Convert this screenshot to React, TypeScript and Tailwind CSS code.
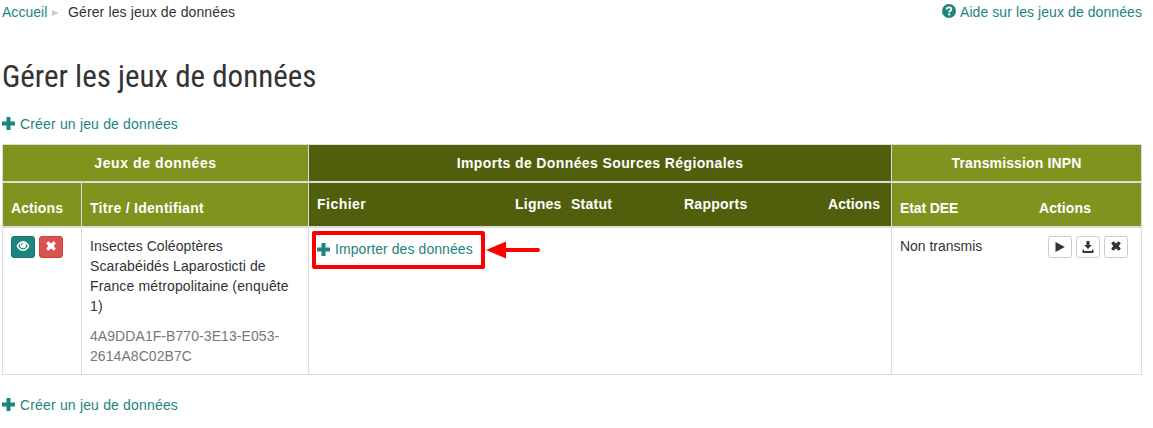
import React from "react";

function Plus() {
  return (
    <svg width="13" height="13" viewBox="0 0 13 13" className="relative -top-px shrink-0" fill="currentColor">
      <path d="M5 0h3q.5 0 .5.5V4.500h4q.5 0 .5.5v3q0 .5-.5.5h-4v4q0 .5-.5.5H5q-.5 0-.5-.5v-4h-4Q0 8.500 0 8V5Q0 4.500.5 4.500h4V.5Q4.500 0 5 0z" />
    </svg>
  );
}

function Cross() {
  return (
    <svg width="10" height="10" viewBox="0 0 10 10" className="relative -top-px" fill="currentColor">
      <path d="M2.300.2 5 2.500 7.700.2 9.800 2.300 7.700 5 9.800 7.700 7.700 9.800 5 7.500 2.300 9.800.2 7.700 2.300 5 .2 2.300z" />
    </svg>
  );
}

function Eye() {
  return (
    <svg width="14" height="12" viewBox="0 0 14 12" className="relative -top-px">
      <path d="M1.300 6Q4 1.700 7 1.700T12.700 6Q10 10.300 7 10.300T1.300 6z" fill="none" stroke="white" strokeWidth="1.500" />
      <circle cx="7" cy="5.300" r="3" fill="white" />
      <path d="M5.200 5.200Q5.300 3.700 6.900 3.500" fill="none" stroke="#1b857e" strokeWidth="1" />
    </svg>
  );
}

function Help() {
  return (
    <svg width="14" height="14" viewBox="0 0 14 14">
      <circle cx="7" cy="7" r="7" fill="currentColor" />
      <path d="M4.700 5.500Q4.700 3.400 7 3.400T9.300 5.200Q9.300 6.300 8.200 6.900Q7.200 7.400 7.200 8.500" fill="none" stroke="white" strokeWidth="1.900" />
      <path d="M6.100 9.500h2.200v1.800H6.100z" fill="white" />
    </svg>
  );
}

function Create() {
  return (
    <a className="flex h-5 items-center gap-[5px] text-[#1b857e]">
      <Plus />
      <span>Créer un jeu de données</span>
    </a>
  );
}

function SmallButton({ children }: { children: React.ReactNode }) {
  return (
    <button className="flex h-[22px] w-6 items-center justify-center rounded-[3px] border border-[#ccc] text-[#333]">
      {children}
    </button>
  );
}

export default function App() {
  return (
    <div className="h-[428px] w-[1153px] overflow-hidden bg-white pl-[2px] pr-[11px] pt-[2px] font-['Liberation_Sans',sans-serif] text-[14px] leading-5 tracking-[0.17px] whitespace-nowrap text-[#333]">
      <div className="flex h-5 justify-between">
        <div className="flex items-center">
          <a className="w-[45px] tracking-[0.03px] text-[#1b857e]">Accueil</a>
          <svg width="7" height="6" viewBox="0 0 7 6" className="ml-[5px] mr-[9px] mt-px" fill="#ccc">
            <path d="M0 0 7 3 0 6z" />
          </svg>
          <span className="tracking-[0.12px]">Gérer les jeux de données</span>
        </div>
        <a className="flex items-center gap-1 text-[#1b857e]">
          <span className="-mt-0.5 h-[14px]"><Help /></span>
          <span className="tracking-[0.08px]">Aide sur les jeux de données</span>
        </a>
      </div>
      <h1 className="mt-[37px] h-9 font-['Roboto_Condensed',Roboto,sans-serif] text-[31px] leading-9 tracking-normal">
        Gérer les jeux de données
      </h1>
      <div className="mt-[19px]">
        <Create />
      </div>

      <div className="mt-[10px] grid h-[231px] w-[1140px] grid-cols-[79px_227px_583px_251px] grid-rows-[38px_45px_147px] border-t border-[#ddd]">
        <div className="col-span-2 border-b-2 border-l border-[#ddd] bg-[#7f931e] pt-2 text-center font-bold tracking-[0.58px] text-white">Jeux de données</div>
        <div className="border-b-2 border-l border-[#ddd] bg-[#4f5f0b] pt-2 text-center font-bold tracking-[0.39px] text-white">Imports de Données Sources Régionales</div>
        <div className="border-x border-b-2 border-[#ddd] bg-[#7f931e] pt-2 text-center font-bold tracking-[0.13px] text-white">Transmission INPN</div>

        <div className="border-b-2 border-l border-[#ddd] bg-[#7f931e] pl-2 pt-[15px] font-bold tracking-[0.1px] text-white">Actions</div>
        <div className="border-b-2 border-l border-[#ddd] bg-[#7f931e] pl-2 pt-[15px] font-bold tracking-[0.28px] text-white">Titre / Identifiant</div>
        <div className="grid grid-cols-[198px_56px_113px_144px_1fr] border-b-2 border-l border-[#ddd] bg-[#4f5f0b] pl-2 pt-[11px] font-bold tracking-[0.25px] text-white">
          <span className="tracking-[0.48px]">Fichier</span>
          <span>Lignes</span>
          <span>Statut</span>
          <span>Rapports</span>
          <span className="tracking-[0.1px]">Actions</span>
        </div>
        <div className="grid grid-cols-[139px_1fr] border-x border-b-2 border-[#ddd] bg-[#7f931e] pl-2 pt-[15px] font-bold tracking-[0.1px] text-white">
          <span className="tracking-[-0.1px]">Etat DEE</span>
          <span>Actions</span>
        </div>

        <div className="flex items-start gap-1 border-b border-l border-[#ddd] pl-2 pt-2">
          <button className="flex h-[22px] w-6 items-center justify-center rounded-[3px] border border-[#17736d] bg-[#1b857e]"><Eye /></button>
          <button className="flex h-[22px] w-6 items-center justify-center rounded-[3px] border border-[#d43f3a] bg-[#d9534f] text-white"><Cross /></button>
        </div>
        <div className="border-b border-l border-[#ddd] pl-2 pt-2">
          <p><span className="tracking-[0.07px]">Insectes Coléoptères</span><br /><span className="tracking-[0.11px]">Scarabéidés Laparosticti de</span><br /><span className="tracking-[0.14px]">France métropolitaine (enquête</span><br />1)</p>
          <p className="mt-[10px] tracking-[0.07px] text-[#777]">4A9DDA1F-B770-3E13-E053-<br />2614A8C02B7C</p>
        </div>
        <div className="flex items-start border-b border-l border-[#ddd] pl-[3px] pt-[3px]">
          <a className="flex h-[38px] w-[173px] items-center gap-[5px] rounded-[2px] border-4 border-[#f00] pl-px text-[#1b857e]">
            <Plus />
            <span className="relative -top-px tracking-[0.08px]">Importer des données</span>
          </a>
          <svg width="54" height="18" viewBox="0 0 54 18" className="ml-px mt-[10px]">
            <path d="M0 9 20 .5v17z" fill="#f00" />
            <path d="M19 9h33" stroke="#f00" strokeWidth="4" strokeLinecap="round" />
          </svg>
        </div>
        <div className="flex items-start justify-between border-x border-b border-[#ddd] pl-2 pr-[13px] pt-2">
          <span className="tracking-[-0.02px]">Non transmis</span>
          <div className="flex gap-1">
            <SmallButton>
              <svg width="10" height="10" viewBox="0 0 10 10" fill="currentColor"><path d="M.5 0 9.800 5 .5 10z" /></svg>
            </SmallButton>
            <SmallButton>
              <svg width="12" height="12" viewBox="0 0 12 12" fill="currentColor"><path d="M4.500 0h3v4h2.300L6 8 2.200 4h2.300zM.5 8.500H2V10h8V8.500h1.500V12H.5z" /></svg>
            </SmallButton>
            <SmallButton><Cross /></SmallButton>
          </div>
        </div>
      </div>
      <div className="mt-5">
        <Create />
      </div>
    </div>
  );
}
